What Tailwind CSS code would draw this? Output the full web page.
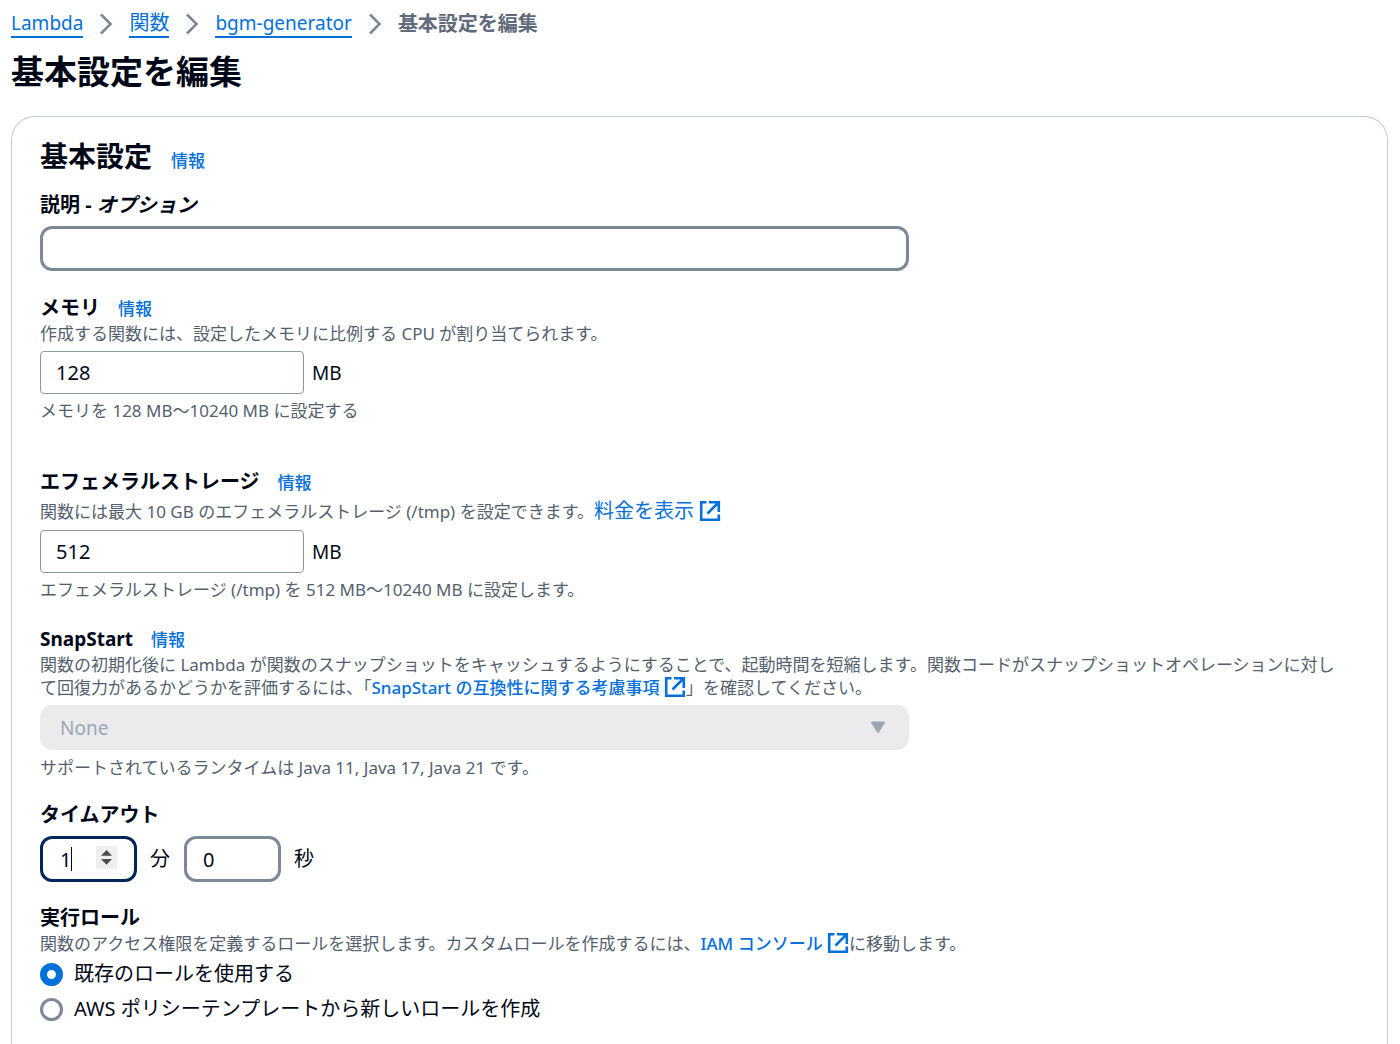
<!DOCTYPE html>
<html lang="ja">
<head>
    <meta charset="UTF-8">
    <meta name="viewport" content="width=device-width, initial-scale=1.0">
    <title>基本設定を編集</title>
    <script src="https://cdn.jsdelivr.net/npm/@tailwindcss/browser@4"></script>
</head>
<body class="bg-white text-[#000716] text-[20px] leading-7 font-['Noto_Sans','Noto_Sans_CJK_JP',sans-serif] flex flex-col min-h-screen pl-[11px] pr-3 pt-[10px]">

    <!-- Shared icons -->
    <svg class="hidden" aria-hidden="true">
        <symbol id="external" viewBox="0 0 22 22">
            <path d="M7.500 2.200H2.200V19.800H19.800V14.500M10 2.200H19.800V12M19.500 2.500L8.500 13.500" fill="none" stroke="currentColor" stroke-width="2.6"/>
        </symbol>
        <symbol id="chevron" viewBox="0 0 14 22">
            <path d="M2 1.500L11.500 11L2 20.500" fill="none" stroke="currentColor" stroke-width="2.6"/>
        </symbol>
    </svg>

    <nav aria-label="パンくずリスト">
        <ol class="flex items-center gap-4 leading-[26px]">
            <li><a href="#" class="block text-[19px] text-[#0470da] border-b-2 border-[#0470da]">Lambda</a></li>
            <li class="text-[#7d8998]" aria-hidden="true"><svg class="w-[14px] h-[22px]"><use href="#chevron"/></svg></li>
            <li><a href="#" class="block text-[#0470da] border-b-2 border-[#0470da]">関数</a></li>
            <li class="text-[#7d8998]" aria-hidden="true"><svg class="w-[14px] h-[22px]"><use href="#chevron"/></svg></li>
            <li><a href="#" class="block text-[19px] text-[#0470da] border-b-2 border-[#0470da]">bgm-generator</a></li>
            <li class="text-[#7d8998]" aria-hidden="true"><svg class="w-[14px] h-[22px]"><use href="#chevron"/></svg></li>
            <li class="font-bold text-[#5f6b7a]" aria-current="page">基本設定を編集</li>
        </ol>
    </nav>

    <h1 class="mt-[14px] text-[33px] leading-10 font-bold">基本設定を編集</h1>

    <main class="mt-6 flex-1 border border-b-0 border-[#c3cad3] rounded-t-3xl pl-7 pr-10 pt-[21px]">
        <div class="flex items-baseline gap-[19px]">
            <h2 class="text-[28px] leading-9 font-bold">基本設定</h2>
            <a href="#" class="text-[17px] font-medium text-[#0470da]">情報</a>
        </div>

        <!-- Description -->
        <div class="mt-4">
            <label for="description" class="block font-bold">説明 - <i>オプション</i></label>
            <input id="description" type="text" class="block mt-[7px] w-full max-w-[869px] h-[45px] px-[18px] border-[3px] border-[#7d8998] rounded-xl">
        </div>

        <!-- Memory -->
        <div class="mt-[23px]">
            <div class="flex items-baseline gap-[18px]">
                <label for="memory" class="font-bold">メモリ</label>
                <a href="#" class="text-[17px] font-medium text-[#0470da]">情報</a>
            </div>
            <p class="text-[17px] leading-[22px] text-[#545f6e]">作成する関数には、設定したメモリに比例する CPU が割り当てられます。</p>
            <div class="mt-[6px] flex items-center gap-2">
                <input id="memory" type="text" inputmode="numeric" value="128" class="w-[264px] h-[43px] px-[15px] border border-[#8c96a3] rounded-sm">
                <span class="text-[19px]">MB</span>
            </div>
            <p class="mt-[6px] text-[17px] leading-[22px] text-[#545f6e]">メモリを 128 MB〜10240 MB に設定する</p>
        </div>

        <!-- Ephemeral storage -->
        <div class="mt-[46px]">
            <div class="flex items-baseline gap-[18px]">
                <label for="storage" class="font-bold">エフェメラルストレージ</label>
                <a href="#" class="text-[17px] font-medium text-[#0470da]">情報</a>
            </div>
            <p class="text-[17px] leading-7 text-[#545f6e]">関数には最大 10 GB のエフェメラルストレージ (/tmp) を設定できます。<a href="#" class="text-[20px] text-[#0470da]">料金を表示 <svg class="inline align-[-4px] w-[22px] h-[22px]"><use href="#external"/></svg></a></p>
            <div class="mt-1 flex items-center gap-2">
                <input id="storage" type="text" inputmode="numeric" value="512" class="w-[264px] h-[43px] px-[15px] border border-[#8c96a3] rounded-sm">
                <span class="text-[19px]">MB</span>
            </div>
            <p class="mt-[6px] text-[17px] leading-[22px] text-[#545f6e]">エフェメラルストレージ (/tmp) を 512 MB〜10240 MB に設定します。</p>
        </div>

        <!-- SnapStart -->
        <div class="mt-6">
            <div class="flex items-baseline gap-[18px]">
                <label for="snapstart" class="text-[19px] font-bold">SnapStart</label>
                <a href="#" class="text-[17px] font-medium text-[#0470da]">情報</a>
            </div>
            <p class="text-[17px] leading-[22px] text-[#545f6e]">関数の初期化後に Lambda が関数のスナップショットをキャッシュするようにすることで、起動時間を短縮します。関数コードがスナップショットオペレーションに対して回復力があるかどうかを評価するには、「<a href="#" class="font-medium text-[#0470da]">SnapStart の互換性に関する考慮事項 <svg class="inline align-[-4px] w-[22px] h-[22px]"><use href="#external"/></svg></a>」を確認してください。</p>
            <div class="relative mt-[6px] w-full max-w-[869px]">
                <select id="snapstart" disabled class="block appearance-none w-full h-[45px] px-5 rounded-xl bg-[#ebebed] text-[19px] text-[#9ba7b6] opacity-100">
                    <option>None</option>
                </select>
                <svg class="absolute right-[23px] top-4 w-4 h-[13px] text-[#9ba7b6]" viewBox="0 0 16 13" aria-hidden="true"><path d="M2 1.500h12L8 11z" fill="currentColor" stroke="currentColor" stroke-width="2" stroke-linejoin="round"/></svg>
            </div>
            <p class="mt-[7px] text-[17px] leading-[22px] text-[#545f6e]">サポートされているランタイムは Java 11, Java 17, Java 21 です。</p>
        </div>

        <!-- Timeout -->
        <fieldset class="mt-[22px]">
            <legend class="font-bold">タイムアウト</legend>
            <div class="mt-[7px] flex items-center">
                <div class="relative">
                    <input id="minutes" type="number" value="1" class="block [appearance:textfield] w-[97px] h-[46px] pl-[17px] border-[3px] border-[#002558] rounded-xl outline-none caret-transparent">
                    <span class="absolute left-[31px] top-[11px] w-px h-6 bg-[#000716]"></span>
                    <svg class="absolute left-14 top-[10px] w-[21px] h-[23px]" viewBox="0 0 21 23" aria-hidden="true"><path d="M0 0h21v23H0z" fill="#efefef"/><path d="M5 9.800L10.500 4L16 9.800zM5 13L10.500 18.800L16 13z" fill="#4c4c4c"/></svg>
                </div>
                <label for="minutes" class="ml-[13px]">分</label>
                <input id="seconds" type="number" value="0" class="ml-[14px] [appearance:textfield] w-[97px] h-[46px] pl-4 border-[3px] border-[#7d8998] rounded-xl">
                <label for="seconds" class="ml-[13px]">秒</label>
            </div>
        </fieldset>

        <!-- Execution role -->
        <fieldset class="mt-[22px]">
            <legend class="font-bold">実行ロール</legend>
            <p class="text-[17px] leading-[22px] text-[#545f6e]">関数のアクセス権限を定義するロールを選択します。カスタムロールを作成するには、<a href="#" class="font-medium text-[#0470da]">IAM コンソール <svg class="inline align-[-4px] w-[22px] h-[22px]"><use href="#external"/></svg></a>に移動します。</p>
            <div class="mt-[5px] flex flex-col gap-[7px]">
                <label class="flex items-center gap-[11px]">
                    <input type="radio" name="role" checked class="appearance-none w-[23px] h-[23px] rounded-full border-[3px] border-[#7d8998] checked:border-[7px] checked:border-[#0470da]">
                    既存のロールを使用する
                </label>
                <label class="flex items-center gap-[11px]">
                    <input type="radio" name="role" class="appearance-none w-[23px] h-[23px] rounded-full border-[3px] border-[#7d8998] checked:border-[7px] checked:border-[#0470da]">
                    AWS ポリシーテンプレートから新しいロールを作成
                </label>
            </div>
        </fieldset>
    </main>

</body>
</html>
